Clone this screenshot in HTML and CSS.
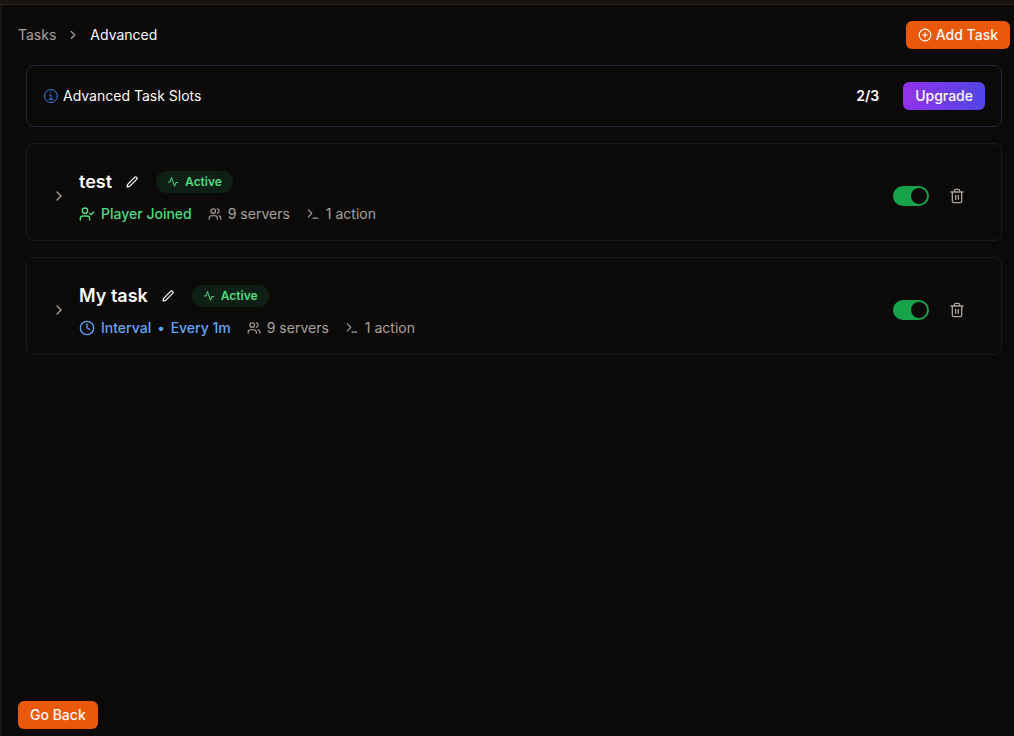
FILE: index.html
```html
<!DOCTYPE html>
<html lang="en">
<head>
  <meta charset="UTF-8">
  <meta name="viewport" content="width=device-width, initial-scale=1.0">
  <title>Advanced Tasks</title>
  <link rel="stylesheet" href="styles.css">
</head>
<body>

  <!-- Shared icons -->
  <svg class="icon-defs" aria-hidden="true">
    <symbol id="chevron" viewBox="0 0 24 24">
      <path d="m9 18 6-6-6-6"/>
    </symbol>
    <symbol id="plus" viewBox="0 0 24 24">
      <circle cx="12" cy="12" r="10"/>
      <path d="M8 12h8M12 8v8"/>
    </symbol>
    <symbol id="info" viewBox="0 0 24 24">
      <circle cx="12" cy="12" r="9.7"/>
      <path d="M11.8 7v.4M10 10.5h2v6.2M9.3 17h5.4"/>
    </symbol>
    <symbol id="pencil" viewBox="0 0 24 24">
      <path d="M21.17 6.81a1 1 0 0 0-3.99-3.99L3.84 16.17a2 2 0 0 0-.5.83l-1.32 4.35a.5.5 0 0 0 .62.62l4.35-1.32a2 2 0 0 0 .83-.5z"/>
    </symbol>
    <symbol id="trash" viewBox="0 0 24 24">
      <path d="M3 6h18M19 6v14a2 2 0 0 1-2 2H7a2 2 0 0 1-2-2V6M8 6V4a2 2 0 0 1 2-2h4a2 2 0 0 1 2 2v2M10 11v6M14 11v6"/>
    </symbol>
    <symbol id="activity" viewBox="0 0 24 24">
      <path d="M21 13h-3l-3 7.5L9 3l-3 9H3"/>
    </symbol>
    <symbol id="user-check" viewBox="0 0 24 24">
      <path d="m16 11 2 2 4-4"/>
      <path d="M16 21v-2a4 4 0 0 0-4-4H6a4 4 0 0 0-4 4v2"/>
      <circle cx="9" cy="7" r="4"/>
    </symbol>
    <symbol id="users" viewBox="0 0 24 24">
      <path d="M16 21v-2a4 4 0 0 0-4-4H6a4 4 0 0 0-4 4v2"/>
      <circle cx="9" cy="7" r="4"/>
      <path d="M22 21v-2a4 4 0 0 0-3-3.87M16 3.13a4 4 0 0 1 0 7.75"/>
    </symbol>
    <symbol id="terminal" viewBox="0 0 24 24">
      <path d="m4 17 6-6-6-6M12 19h8"/>
    </symbol>
    <symbol id="clock" viewBox="0 0 24 24">
      <circle cx="12" cy="12" r="10"/>
      <path d="M12 6v6l4 2"/>
    </symbol>
  </svg>

  <div class="topbar"></div>

  <div class="page">
    <header class="header">
      <nav class="breadcrumb" aria-label="Breadcrumb">
        <a href="#">Tasks</a>
        <svg class="icon-sm"><use href="#chevron"/></svg>
        <span class="current">Advanced</span>
      </nav>
      <button class="btn"><svg class="icon-sm"><use href="#plus"/></svg>Add Task</button>
    </header>

    <main class="content">
      <section class="slots">
        <svg class="icon-md info"><use href="#info"/></svg>
        <span class="slots-title">Advanced Task Slots</span>
        <span class="slots-count">2/3</span>
        <button class="btn btn-upgrade">Upgrade</button>
      </section>

      <!-- Task list -->
      <article class="task">
        <button class="expand" aria-label="Expand test"><svg class="icon-md"><use href="#chevron"/></svg></button>
        <div class="task-body">
          <div class="task-head">
            <h2>test</h2>
            <button class="edit" aria-label="Rename test"><svg class="icon-xs"><use href="#pencil"/></svg></button>
            <span class="badge"><svg class="icon-xs"><use href="#activity"/></svg>Active</span>
          </div>
          <div class="task-meta">
            <span class="trigger joined"><svg class="icon-md"><use href="#user-check"/></svg>Player Joined</span>
            <span class="stat"><svg class="icon-sm"><use href="#users"/></svg>9 servers</span>
            <span class="stat"><svg class="icon-sm"><use href="#terminal"/></svg>1 action</span>
          </div>
        </div>
        <input type="checkbox" role="switch" class="switch" aria-label="Enable test" checked>
        <button class="delete" aria-label="Delete test"><svg class="icon-md"><use href="#trash"/></svg></button>
      </article>

      <article class="task">
        <button class="expand" aria-label="Expand My task"><svg class="icon-md"><use href="#chevron"/></svg></button>
        <div class="task-body">
          <div class="task-head">
            <h2>My task</h2>
            <button class="edit" aria-label="Rename My task"><svg class="icon-xs"><use href="#pencil"/></svg></button>
            <span class="badge"><svg class="icon-xs"><use href="#activity"/></svg>Active</span>
          </div>
          <div class="task-meta">
            <span class="trigger interval"><svg class="icon-md"><use href="#clock"/></svg>Interval <span>•</span> Every 1m</span>
            <span class="stat"><svg class="icon-sm"><use href="#users"/></svg>9 servers</span>
            <span class="stat"><svg class="icon-sm"><use href="#terminal"/></svg>1 action</span>
          </div>
        </div>
        <input type="checkbox" role="switch" class="switch" aria-label="Enable My task" checked>
        <button class="delete" aria-label="Delete My task"><svg class="icon-md"><use href="#trash"/></svg></button>
      </article>
    </main>

    <footer class="footer">
      <button class="btn">Go Back</button>
    </footer>
  </div>

</body>
</html>
```
FILE: styles.css
```css
* {
  box-sizing: border-box;
}

body {
  margin: 0;
  min-height: 100vh;
  display: flex;
  flex-direction: column;
  background-color: #0c0a09;
  color: #fafaf9;
  font-family: Inter, sans-serif;
  font-size: 14px;
  line-height: 20px;
}

button {
  font: inherit;
  color: inherit;
  background: none;
  border: none;
  padding: 0;
  cursor: pointer;
}

/* Icons */
svg {
  display: block;
  flex-shrink: 0;
  fill: none;
  stroke: currentColor;
  stroke-width: 2;
  stroke-linecap: round;
  stroke-linejoin: round;
}

.icon-defs {
  position: absolute;
  width: 0;
  height: 0;
}

.icon-xs {
  width: 12px;
  height: 12px;
}

.icon-sm {
  width: 14px;
  height: 14px;
}

.icon-md {
  width: 16px;
  height: 16px;
}

/* Page frame */
.topbar {
  height: 5px;
  background-color: #171412;
  border-bottom: 1px solid #292524;
}

.page {
  flex: 1;
  display: flex;
  flex-direction: column;
  border-left: 2px solid #171412;
}

.header {
  display: flex;
  align-items: center;
  justify-content: space-between;
  padding: 16px 4px 16px 16px;
}

.breadcrumb {
  display: flex;
  align-items: center;
  gap: 10px;
  color: #a8a29e;
}

.breadcrumb a {
  color: inherit;
  text-decoration: none;
}

.breadcrumb .current {
  color: #fafaf9;
}

/* Buttons */
.btn {
  display: flex;
  align-items: center;
  gap: 4px;
  height: 28px;
  padding: 0 12px;
  border-radius: 6px;
  background-color: #ea580c;
  color: #fafaf9;
  font-weight: 500;
}

.btn-upgrade {
  background: linear-gradient(to right, #9333ea, #4f46e5);
}

/* Cards */
.content {
  flex: 1;
  display: flex;
  flex-direction: column;
  gap: 16px;
  padding: 0 12px 0 24px;
}

.slots {
  display: flex;
  align-items: center;
  padding: 16px;
  border: 1px solid #1e293b;
  border-radius: 8px;
}

.info {
  margin-right: 4px;
  color: #3b82f6;
  stroke-width: 1.5;
}

.slots-title {
  flex: 1;
}

.slots-count {
  margin-right: 24px;
  font-weight: 600;
}

.task {
  display: flex;
  align-items: center;
  padding: 24px 24px 16px;
  border: 1px solid #1c1917;
  border-radius: 8px;
}

.expand {
  margin-right: 12px;
  color: #a8a29e;
}

.task-body {
  flex: 1;
}

.task-head {
  display: flex;
  align-items: center;
  margin-bottom: 8px;
}

.task-head h2 {
  margin: 0;
  font-size: 18px;
  line-height: 28px;
  font-weight: 600;
}

.edit {
  margin: 0 12px 0 8px;
  padding: 6px;
}

.edit svg {
  stroke-width: 2.5;
}

.badge {
  display: flex;
  align-items: center;
  gap: 6px;
  height: 22px;
  padding: 0 11px;
  border-radius: 11px;
  background-color: #0e2015;
  color: #4ade80;
  font-size: 12px;
  font-weight: 600;
}

.task-meta {
  display: flex;
  align-items: center;
  gap: 16px;
  color: #a8a29e;
}

.trigger,
.stat {
  display: flex;
  align-items: center;
  gap: 6px;
}

.trigger {
  font-weight: 500;
}

.joined {
  color: #4ade80;
}

.interval {
  color: #60a5fa;
}

.switch {
  appearance: none;
  display: flex;
  width: 36px;
  height: 20px;
  margin: 0 8px 0 0;
  padding: 2px;
  border-radius: 10px;
  background-color: #292524;
  cursor: pointer;
}

.switch::before {
  content: "";
  width: 16px;
  height: 16px;
  border-radius: 50%;
  background-color: #0c0a09;
}

.switch:checked {
  justify-content: flex-end;
  background-color: #16a34a;
}

.delete {
  padding: 6px 12px;
  color: #a8a29e;
}

.footer {
  padding: 16px 16px 7px;
}
```
